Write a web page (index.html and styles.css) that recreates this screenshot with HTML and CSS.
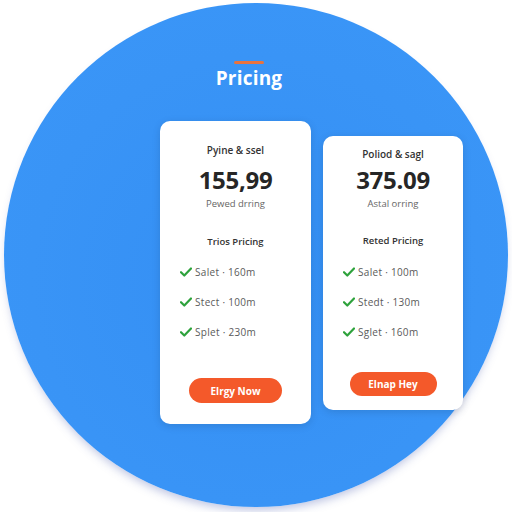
FILE: index.html
```html
<!DOCTYPE html>
<html lang="en">
<head>
    <meta charset="UTF-8">
    <meta name="viewport" content="width=device-width, initial-scale=1.0">
    <title>Pricing</title>
    <link rel="stylesheet" href="styles.css">
</head>
<body>

<div class="stage">
    <div class="circle">

        <!-- Heading -->
        <header class="heading">
            <div class="accent"></div>
            <h1>Pricing</h1>
        </header>

        <!-- Plans -->
        <div class="plans">
            <div class="plan plan-main">
                <div class="plan-title">Pyine &amp; ssel</div>
                <div class="plan-price">155,99</div>
                <div class="plan-sub">Pewed drring</div>
                <div class="plan-name">Trios Pricing</div>
                <ul class="features">
                    <li><svg class="check" viewBox="0 0 12 10"><path d="M1 5.2 L4.3 8.5 L11 1.5"/></svg>Salet · 160m</li>
                    <li><svg class="check" viewBox="0 0 12 10"><path d="M1 5.2 L4.3 8.5 L11 1.5"/></svg>Stect · 100m</li>
                    <li><svg class="check" viewBox="0 0 12 10"><path d="M1 5.2 L4.3 8.5 L11 1.5"/></svg>Splet · 230m</li>
                </ul>
                <button class="buy">Elrgy Now</button>
            </div>

            <div class="plan plan-alt">
                <div class="plan-title">Poliod &amp; sagl</div>
                <div class="plan-price">375.09</div>
                <div class="plan-sub">Astal orring</div>
                <div class="plan-name">Reted Pricing</div>
                <ul class="features">
                    <li><svg class="check" viewBox="0 0 12 10"><path d="M1 5.2 L4.3 8.5 L11 1.5"/></svg>Salet · 100m</li>
                    <li><svg class="check" viewBox="0 0 12 10"><path d="M1 5.2 L4.3 8.5 L11 1.5"/></svg>Stedt · 130m</li>
                    <li><svg class="check" viewBox="0 0 12 10"><path d="M1 5.2 L4.3 8.5 L11 1.5"/></svg>Sglet · 160m</li>
                </ul>
                <button class="buy">Elnap Hey</button>
            </div>
        </div>

    </div>
</div>

</body>
</html>
```

FILE: styles.css
```css
body {
    margin: 0;
    padding: 0;
    background: #fff;
    font-family: "Open Sans", "Liberation Sans", sans-serif;
}
.stage {
    width: 512px;
    height: 512px;
    overflow: hidden;
    background: #fff;
}
.circle {
    width: 504px;
    height: 504px;
    margin: 3px 0 0 4px;
    border-radius: 50%;
    background: radial-gradient(circle at 50% 55%, #348ff4 0%, #3994f6 60%, #3b97f8 100%);
    box-shadow: 0 6px 10px -3px rgba(60, 80, 170, 0.35);
    padding-top: 58px;
    box-sizing: border-box;
}
.heading {
    display: flex;
    flex-direction: column;
    align-items: center;
    padding-right: 14px;
}
.accent {
    width: 30px;
    height: 3px;
    border-radius: 2px;
    background: #e8733f;
    margin-bottom: 3px;
}
.heading h1 {
    margin: 0;
    color: #fff;
    font-family: "Open Sans", sans-serif;
    font-size: 19px;
    font-weight: 700;
    line-height: 22px;
    letter-spacing: 0.2px;
}
.plans {
    display: flex;
    align-items: flex-start;
    gap: 12px;
    margin-top: 32px;
    padding-left: 156px;
}
.plan {
    background: #fff;
    border-radius: 10px;
    box-shadow: 0 2px 8px rgba(0, 0, 0, 0.12);
    text-align: center;
    box-sizing: border-box;
}
.plan-main {
    width: 151px;
    padding: 22px 0 21px;
}
.plan-alt {
    width: 140px;
    margin-top: 15px;
    padding: 11px 0 14px;
}
.plan-title {
    font-size: 10px;
    font-weight: 600;
    line-height: 14px;
    color: #333;
}
.plan-price {
    font-size: 24px;
    font-weight: 700;
    line-height: 30px;
    color: #262626;
    letter-spacing: -0.3px;
}
.plan-main .plan-price {
    margin-top: 8px;
}
.plan-alt .plan-price {
    margin-top: 4px;
}
.plan-sub {
    margin-top: 2px;
    font-size: 9.5px;
    line-height: 14px;
    color: #666;
}
.plan-name {
    font-size: 9.5px;
    font-weight: 600;
    line-height: 14px;
    color: #333;
}
.plan-main .plan-name {
    margin-top: 24px;
}
.plan-alt .plan-name {
    margin-top: 23px;
}
.features {
    list-style: none;
    margin: 15px 0 0;
    padding: 0 0 0 20px;
    display: flex;
    flex-direction: column;
    gap: 14px;
    text-align: left;
}
.plan-alt .features {
    margin-top: 16px;
}
.features li {
    display: flex;
    align-items: center;
    gap: 3px;
    font-size: 10px;
    line-height: 16px;
    letter-spacing: 0.3px;
    color: #5a5a5a;
}
.check {
    width: 12px;
    height: 10px;
    fill: none;
    stroke: #2ea23c;
    stroke-width: 2.2;
    stroke-linecap: round;
    stroke-linejoin: round;
}
.buy {
    display: block;
    margin: 38px auto 0;
    width: 93px;
    height: 25px;
    border: none;
    border-radius: 13px;
    background: #f4592a;
    color: #fff;
    font-family: "Open Sans", sans-serif;
    font-size: 10px;
    font-weight: 700;
    cursor: pointer;
}
.plan-alt .buy {
    margin-top: 32px;
    width: 87px;
    height: 24px;
}
```
